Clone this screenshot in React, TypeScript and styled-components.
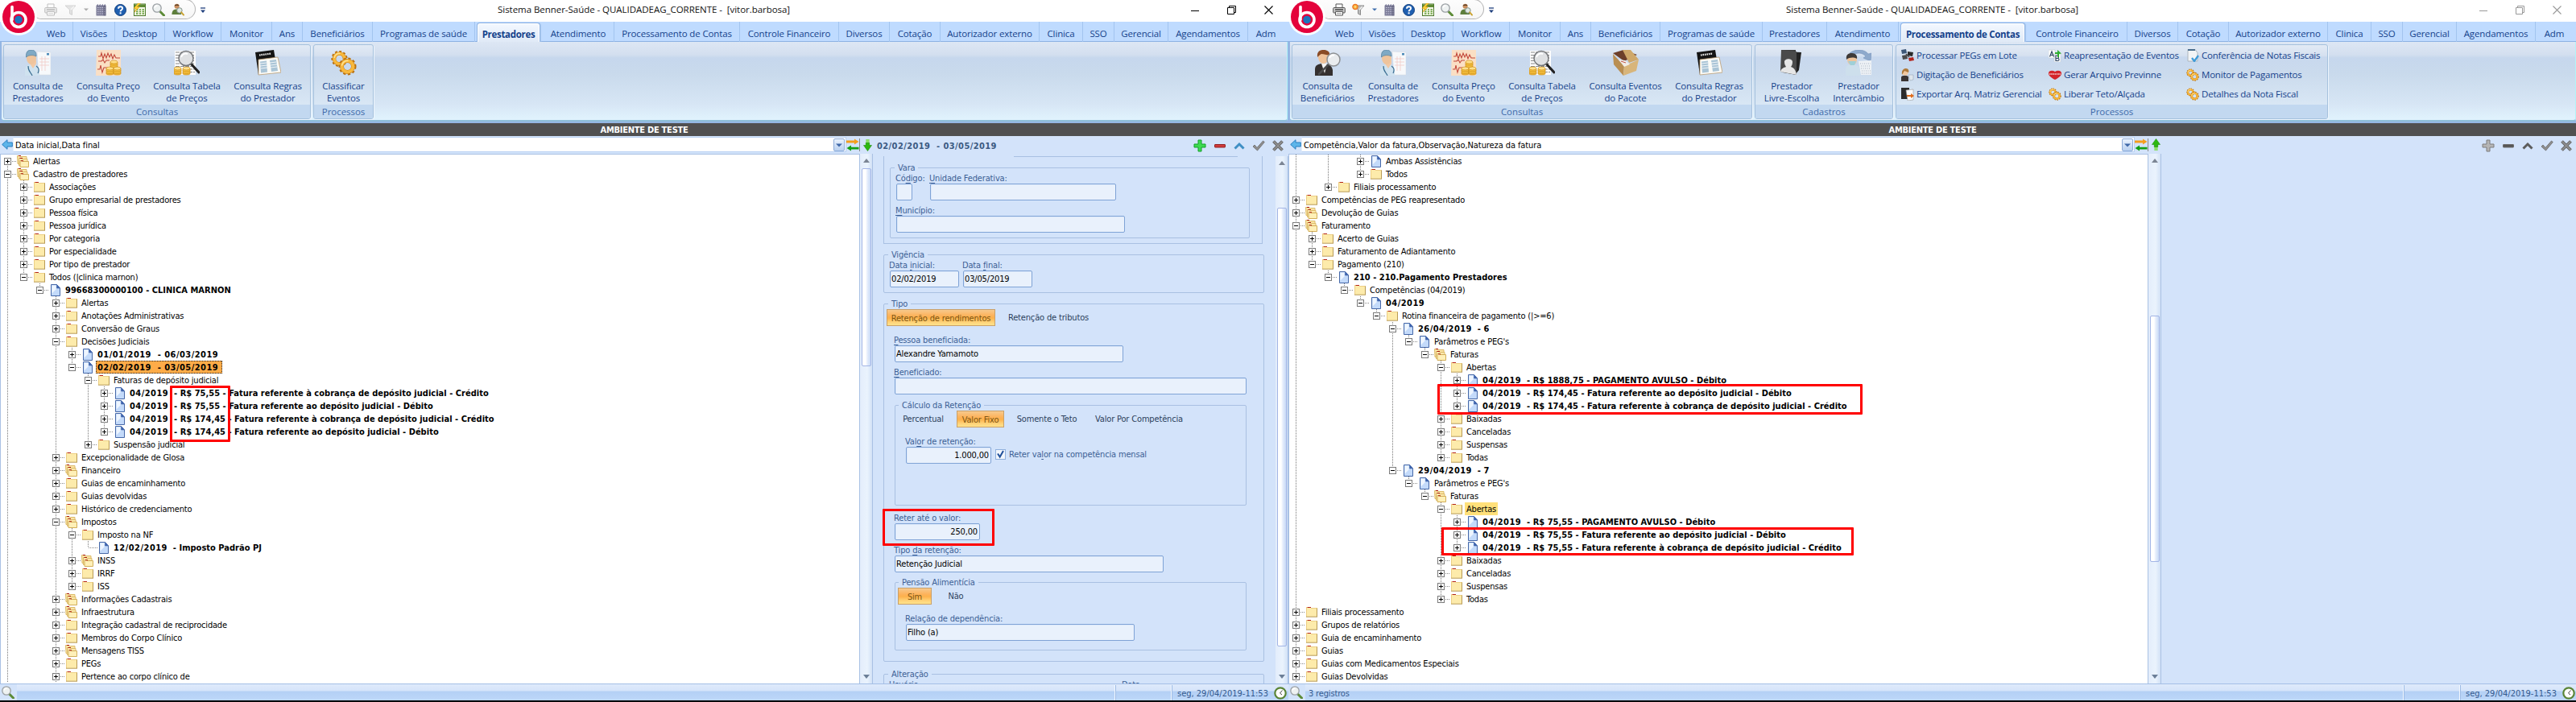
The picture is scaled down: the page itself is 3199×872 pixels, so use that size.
import React from "react";
import styled, { createGlobalStyle, css } from "styled-components";

const TAHOMA = '"DejaVu Sans Condensed", "DejaVu Sans", sans-serif';
const SEGOE = '"Open Sans", "Noto Sans", sans-serif';

const GlobalStyle = createGlobalStyle`
  * { box-sizing: border-box; }
  body { margin: 0; background: #000; overflow: hidden; }
  #root { height: 872px; }
`;

const Desktop = styled.main`
  display: flex;
  height: 872px;
  width: 3199px;
  background: #000;
  overflow: hidden;
`;

const AppWindow = styled.section`
  position: relative;
  display: flex;
  flex-direction: column;
  width: 1600px;
  height: 870px;
  flex: none;
  background: #d3e3fa;
  font-family: ${TAHOMA};
  font-size: 11px;
  white-space: pre;
`;

/* ---------- title bar ---------- */

const TitleBar = styled.header`
  position: relative;
  display: flex;
  align-items: flex-start;
  height: 27px;
  background: #fff;
`;

const QuickBar = styled.div`
  display: flex;
  align-items: center;
  width: 204px;
  height: 25px;
  margin: -1px 0 0 39px;
  padding: 1px 0 0 15px;
  border: 1px solid #b4b4b4;
  border-left-color: transparent;
  border-radius: 0 14px 14px 14px;
  background: linear-gradient(#fdfdfd, #f6f6f6);
`;

const QuickIcon = styled.span<{ $gap?: number; $w?: number; $faded?: boolean }>`
  display: flex;
  justify-content: center;
  width: ${(p) => p.$w ?? 16}px;
  margin-right: ${(p) => p.$gap ?? 8}px;
  opacity: ${(p) => (p.$faded ? 0.35 : 1)};
  filter: ${(p) => (p.$faded ? "grayscale(1)" : "none")};
`;

const BarMenu = styled.span`
  display: flex;
  margin: 9px 0 0 6px;
`;

const Title = styled.h1`
  margin: 0 0 0 363px;
  width: 380px;
  font: 400 11.5px/24px ${SEGOE};
  letter-spacing: -0.04px;
  color: #111;
`;

const WindowButtons = styled.div<{ $active: boolean }>`
  display: flex;
  align-items: center;
  gap: 35px;
  margin-left: 481px;
  height: 25px;
  color: ${(p) => (p.$active ? "#000" : "#999")};
`;

const Logo = styled.div`
  position: absolute;
  left: 0;
  top: -2px;
  width: 48px;
  height: 48px;
  z-index: 2;
`;

/* ---------- ribbon ---------- */

const TabStrip = styled.nav`
  display: flex;
  height: 25px;
  padding-left: 49px;
  background: #bfdbff;
  border-bottom: 1px solid #8db2e3;
`;

const Tab = styled.span<{ $w: number; $active?: boolean }>`
  width: ${(p) => p.$w}px;
  height: 25px;
  flex: none;
  text-align: center;
  color: #15428b;
  font: 400 11.5px/30px ${SEGOE};
  letter-spacing: -0.13px;
  border-right: 1px solid #a2c4ef;
  overflow: hidden;
  &:last-child { border-right: 0; }
  ${(p) =>
    p.$active &&
    css`
      width: ${p.$w - 5}px;
      margin: 1px 3px 0 2px;
      font-weight: 700;
      line-height: 27px;
      letter-spacing: -0.3px;
      background: linear-gradient(#f3f8ff, #dfe9f6);
      border: 1px solid #8db2e3;
      border-bottom: 0;
      border-radius: 4px 4px 0 0;
      box-shadow: 1px 0 1px #a9c8ee, inset 0 0 0 1px #fff;
    `}
`;

const Ribbon = styled.div`
  height: 101px;
  padding: 0 1px 2px 2px;
  background: #94b6e3;
`;

const RibbonBody = styled.div`
  display: flex;
  gap: 3px;
  height: 99px;
  padding: 3px 2px;
  border-radius: 0 0 4px 4px;
  border-right: 1px solid #b2f4f8;
  border-bottom: 2px solid #8fbfd8;
  background: linear-gradient(#dde7f4 0, #d3dfef 16px, #c6d7ed 20px, #c9daec 40px, #d7e6f5 78px, #e0f2fd 95px);
`;

const Group = styled.section<{ $w: number }>`
  display: flex;
  flex-direction: column;
  width: ${(p) => p.$w}px;
  height: 93px;
  border: 1px solid #a5c1dd;
  border-radius: 3px;
  background: linear-gradient(#e2eaf5 0, #d6e1f0 13px, #c8d8ee 15px, #cbdbed 36px, #d9e7f5 75px);
  box-shadow: 1px 1px 0 #edf5fd;
  overflow: hidden;
`;

const GroupItems = styled.div`
  display: flex;
  flex: 1;
  padding: 6px 2px 0;
`;

const GroupLabel = styled.footer`
  height: 17px;
  background: #c2d8f0;
  color: #3e6aaa;
  text-align: center;
  font: 400 11.5px/17px ${SEGOE};
  letter-spacing: -0.05px;
`;

const LargeButton = styled.div<{ $w: number }>`
  display: flex;
  flex-direction: column;
  align-items: center;
  width: ${(p) => p.$w}px;
  flex: none;
  text-align: center;
  color: #15428b;
  font: 400 11.5px/15px ${SEGOE};
  letter-spacing: -0.13px;
  svg { margin-bottom: 5px; }
`;

const SmallColumn = styled.div<{ $w: number }>`
  display: flex;
  flex-direction: column;
  width: ${(p) => p.$w}px;
  margin-top: -5px;
`;

const SmallButton = styled.div`
  display: flex;
  align-items: center;
  gap: 3px;
  height: 24px;
  padding-left: 4px;
  color: #15428b;
  font: 400 11.5px/24px ${SEGOE};
  letter-spacing: -0.21px;
`;

const EnvironmentBar = styled.div`
  height: 16px;
  background: #505050;
  color: #fff;
  text-align: center;
  font-weight: 700;
  line-height: 17px;
  letter-spacing: -0.25px;
`;

/* ---------- toolbar ---------- */

const Toolbar = styled.div`
  display: flex;
  align-items: center;
  height: 22px;
  padding: 0 0 1px 2px;
  background: #d3e3fa;
`;

const PathInput = styled.div`
  display: flex;
  align-items: center;
  justify-content: space-between;
  width: 1035px;
  height: 19px;
  margin-left: 0;
  padding: 1px 1px 0 2px;
  background: #fff;
  border: 1px solid #b9d2f3;
  border-left-color: #e6effc;
  color: #000;
  letter-spacing: -0.09px;
`;

const DropButton = styled.span`
  display: flex;
  align-items: center;
  justify-content: center;
  width: 14px;
  height: 16px;
  border: 1px solid #8fadd9;
  border-radius: 2px;
  background: linear-gradient(#eaf2fd, #b9d0f0);
`;

const SwapIcon = styled.span`
  display: flex;
  width: 17px;
  height: 16px;
  border-right: 1px solid #8a8a8a;
`;

const RecordTitle = styled.h2`
  width: 391px;
  margin: 0 0 0 5px;
  padding-top: 4px;
  font: 700 11px/16px ${TAHOMA};
  letter-spacing: 0.41px;
  color: #3b5a82;
`;

const ArrowSlot = styled.span`
  display: flex;
  width: 12px;
  margin-left: 4px;
`;

const Actions = styled.div`
  display: flex;
  align-items: center;
  gap: 8px;
  margin: 2px 0 0 2px;
`;

/* ---------- workspace ---------- */

const Workspace = styled.div`
  display: flex;
  height: 658px;
  overflow: hidden;
`;

const TreePanel = styled.div`
  position: relative;
  width: 1068px;
  height: 658px;
  flex: none;
  border: 1px solid #a9c1e4;
  border-bottom: 0;
  background: #fff;
  overflow: hidden;
`;

const Row = styled.div`
  display: flex;
  align-items: center;
  height: 16px;
`;

const GuideCell = styled.span<{ $line: "none" | "full" | "top" | "bottom" }>`
  width: 20px;
  height: 16px;
  flex: none;
  background: ${(p) =>
    p.$line === "none"
      ? "none"
      : "repeating-linear-gradient(#777 0 1px, transparent 1px 2px) no-repeat"};
  background-size: 1px ${(p) => (p.$line === "full" ? 16 : 8)}px;
  background-position: 8px ${(p) => (p.$line === "bottom" ? 8 : 0)}px;
`;

const NodeCell = styled(GuideCell)`
  display: flex;
  align-items: center;
  padding-left: 4px;
`;

const Expander = styled.span`
  position: relative;
  width: 9px;
  height: 9px;
  flex: none;
  border: 1px solid #7b7b7b;
  background: #fff;
`;

const ExpanderSign = styled.svg`
  display: block;
  width: 7px;
  height: 7px;
`;

const Stub = styled.span<{ $leaf?: boolean }>`
  width: ${(p) => (p.$leaf ? 11 : 6)}px;
  margin-left: ${(p) => (p.$leaf ? 5 : 1)}px;
  height: 1px;
  background: repeating-linear-gradient(90deg, #888 0 1px, transparent 1px 2px);
`;

const NodeIcon = styled.span`
  display: flex;
  width: 16px;
  height: 16px;
  flex: none;
`;

const NodeText = styled.span<{ $bold?: boolean; $mark?: "selected" | "soft" }>`
  height: 16px;
  margin-left: 2px;
  padding: 0 2px;
  line-height: 17px;
  color: #000;
  font-weight: ${(p) => (p.$bold ? 700 : 400)};
  letter-spacing: ${(p) => (p.$bold ? "0.02px" : "-0.19px")};
  ${(p) =>
    p.$mark === "selected" &&
    css`
      padding: 0 4px 0 1px;
      line-height: 15px;
      background: #ffac48;
      border: 1px dotted #222;
    `}
  ${(p) => p.$mark === "soft" && css`background: #ffe07a;`}
`;

const DateRun = styled.span`
  letter-spacing: 0.46px;
`;

const Scrollbar = styled.div<{ $top?: number }>`
  position: relative;
  width: 16px;
  height: ${(p) => 658 - (p.$top ?? 0)}px;
  margin-top: ${(p) => p.$top ?? 0}px;
  flex: none;
  display: flex;
  flex-direction: column;
  align-items: center;
  background: linear-gradient(90deg, #e3edfb, #eaf3fd 60%, #d2e1f6);
  border-right: 1px solid #a9c1e4;
`;

const Thumb = styled.span<{ $before: number; $h: number }>`
  width: 12px;
  height: ${(p) => p.$h}px;
  margin-top: ${(p) => p.$before}px;
  border: 1px solid #a3b5e6;
  border-radius: 2px;
  background: linear-gradient(90deg, #fff 40%, #e6eefc 60%, #c8daf6);
`;

const ScrollArrow = styled.span<{ $down?: boolean }>`
  width: 0;
  height: 0;
  border: 4.5px solid transparent;
  ${(p) =>
    p.$down
      ? css`
          margin-top: auto;
          margin-bottom: 2px;
          border-top: 5px solid #6c7f98;
        `
      : css`
          margin-top: 2px;
          border-bottom: 5px solid #7b8594;
        `}
`;

const Highlight = styled.div<{ $x: number; $y: number; $w: number; $h: number }>`
  position: absolute;
  left: ${(p) => p.$x}px;
  top: ${(p) => p.$y}px;
  width: ${(p) => p.$w}px;
  height: ${(p) => p.$h}px;
  border: 3px solid #f00;
  border-radius: 1px;
`;

/* ---------- record form ---------- */

const Form = styled.div`
  position: relative;
  width: 500px;
  height: 658px;
  flex: none;
  padding: 3px 0 0 13px;
  overflow: hidden;
  color: #3c5f95;
  letter-spacing: -0.16px;
`;

const OpenFrame = styled.div`
  width: 471px;
  height: 109px;
  border: 1px solid #a9c0e2;
  border-top: 0;
`;

const CutLine = styled.div`
  width: 278px;
  height: 1px;
  margin-left: 161px;
  background: #a9c0e2;
`;

const Frame = styled.fieldset<{ $w: number; $h: number; $mt?: number; $ml?: number; $pad?: number }>`
  width: ${(p) => p.$w}px;
  height: ${(p) => p.$h}px;
  min-width: 0;
  margin: ${(p) => p.$mt ?? 0}px 0 0 ${(p) => p.$ml ?? 0}px;
  padding: 0 0 0 ${(p) => p.$pad ?? 7}px;
  border: 1px solid #a9c0e2;
  border-radius: 2px;
`;

const Legend = styled.legend<{ $pull?: number }>`
  height: 14px;
  margin-left: ${(p) => p.$pull ?? -2}px;
  padding: 0 4px;
  line-height: 15px;
`;

const FieldRow = styled.div<{ $mt?: number; $gap?: number }>`
  display: flex;
  align-items: flex-end;
  gap: ${(p) => p.$gap ?? 5}px;
  margin-top: ${(p) => p.$mt ?? 0}px;
`;

const Field = styled.label<{ $w: number }>`
  display: block;
  width: ${(p) => p.$w}px;
  flex: none;
`;

const FieldLabel = styled.span`
  display: block;
  height: 13px;
  margin-left: -1px;
  line-height: 13px;
  u { text-underline-offset: 2px; }
`;

const FieldValue = styled.span<{ $right?: boolean }>`
  display: block;
  height: 21px;
  padding: 0 2px 0 1px;
  line-height: 19px;
  text-align: ${(p) => (p.$right ? "right" : "left")};
  color: #000;
  background: #e9f1fc;
  border: 1px solid #7fa3d6;
  border-radius: 2px;
  box-shadow: inset 1px 1px 0 #dce8fa;
`;

const ToggleRow = styled.div<{ $ml: number }>`
  display: flex;
  gap: 10px;
  margin-left: ${(p) => p.$ml}px;
`;

const Toggle = styled.span<{ $w: number; $on?: boolean }>`
  width: ${(p) => p.$w}px;
  height: 21px;
  text-align: center;
  line-height: 22px;
  color: #2c3f5c;
  ${(p) =>
    p.$on &&
    css`
      line-height: 20px;
      padding-top: 1px;
      color: #7c5512;
      border: 1px solid #c9a069;
      background: linear-gradient(#f7c98d 0, #fdb35c 7px, #fdb14c 10px, #ffd277 15px, #ffe791 20px);
    `}
`;

const Check = styled.span`
  display: flex;
  align-items: center;
  gap: 4px;
  height: 17px;
  margin-bottom: 3px;
  u { text-underline-offset: 2px; }
`;

/* ---------- status bar ---------- */

const StatusBar = styled.footer`
  display: flex;
  align-items: center;
  height: 21px;
  border-top: 1px solid #a4bfe6;
  background: linear-gradient(#dfeafb 0, #d5e4fa 8px, #b4d0f5 9px, #bdd7f9 20px);
  color: #33598f;
`;

const StatusIcon = styled.span`
  display: flex;
  align-items: center;
  width: 21px;
  height: 20px;
  padding-left: 2px;
  background: #d3e3fa;
`;

const StatusCell = styled.span<{ $w: number }>`
  width: ${(p) => p.$w}px;
  height: 19px;
  padding: 3px 0 0 4px;
  line-height: 16px;
  border-right: 1px solid #f2f8ff;
  box-shadow: 1px 0 0 #9dbbe5;
  letter-spacing: -0.16px;
`;

const StatusClock = styled.span`
  display: flex;
  align-items: center;
  justify-content: space-between;
  flex: 1;
  padding: 2px 2px 0 7px;
  letter-spacing: 0;
`;

/* ---------- drawings ---------- */

const BennerLogo = () => (
  <svg width="48" height="48" viewBox="0 0 48 48">
    <circle cx="23" cy="23" r="23" fill="#fff" opacity=".9" />
    <circle cx="23" cy="23" r="20" fill="#e4033b" />
    <path d="M15 10.500V26.500" stroke="#fff" strokeWidth="3.600" strokeLinecap="round" />
    <circle cx="23" cy="26.500" r="9" fill="none" stroke="#fff" strokeWidth="3.600" />
    <circle cx="23" cy="26.500" r="4.800" fill="#1c75bc" />
  </svg>
);

const Printer = () => (
  <svg width="16" height="16" viewBox="0 0 16 16">
    <path d="M4 1h8v5H4z" fill="#fff" stroke="#555" />
    <rect x=".7" y="5.500" width="14.600" height="6.500" rx="1" fill="#c9c9c9" stroke="#555" />
    <path d="M3 8h10" stroke="#444" strokeWidth="1.500" />
    <path d="M3.500 10.500h9V15h-9z" fill="#fff" stroke="#555" />
    <path d="M5 12.700h6" stroke="#999" />
  </svg>
);

const Funnel = ({ lit }: { lit: boolean }) => (
  <svg width="16" height="16" viewBox="0 0 16 16">
    <path d="M2 3h13l-4.500 5v6.500l-3-1.500V8z" fill="#bdbdbd" stroke="#8a8a8a" />
    <path d="M9 8l4-4" stroke="#f2f2f2" strokeWidth="1.500" />
    {lit && <circle cx="4" cy="4.500" r="3.300" fill="#f7a53a" stroke="#ea6a1c" />}
    {lit && <circle cx="4" cy="4.500" r="1.300" fill="#ffe27a" />}
  </svg>
);

const CaretDown = ({ color }: { color: string }) => (
  <svg width="6" height="4" viewBox="0 0 6 4">
    <path d="M0 .5h6L3 3.500z" fill={color} />
  </svg>
);

const Building = () => (
  <svg width="14" height="16" viewBox="0 0 14 16">
    <path d="M.5 15.500V3l2-2 1 2 2-2 1 2 2-2 1 2 2-2 1 2v12.500z" fill="#7c7c98" />
    <path d="M2 5.500h10M2 8h10M2 10.500h10M2 13h10" stroke="#c6c6da" strokeDasharray="1.500 1.200" />
    <path d="M9.500 3h3v12.500h-3z" fill="#55556e" opacity=".45" />
  </svg>
);

const Help = () => (
  <svg width="15" height="15" viewBox="0 0 15 15">
    <circle cx="7.500" cy="7.500" r="7" fill="#1f5fb0" stroke="#123f7c" />
    <path d="M5 5.700C5 4 6.200 3.200 7.500 3.200S10.100 4 10.100 5.500C10.100 7.200 7.600 7.300 7.600 9.200" fill="none" stroke="#fff" strokeWidth="1.900" />
    <rect x="6.600" y="10.300" width="2" height="2" fill="#fff" />
  </svg>
);

const Calc = () => (
  <svg width="16" height="16" viewBox="0 0 16 16">
    <rect x="1.500" y="1" width="14" height="14.500" fill="#f4f7e6" stroke="#4d7a2c" />
    <path d="M2 1.500h13v3.500H2z" fill="#5e8b35" />
    <path d="M4 8h2.500M8 8h2M11.500 8H14M4 10.500h2.500M8 10.500h2M11.500 10.500H14M4 13h2.500M8 13h2M11.500 13H14" stroke="#5f9a36" strokeWidth="1.700" />
    <path d="M6.500 0L1 6.500h3L2 11l6.500-6.500H5.200L9.500 0z" fill="#ffd23a" stroke="#d59b12" strokeWidth=".6" />
  </svg>
);

const Magnifier = () => (
  <svg width="16" height="16" viewBox="0 0 16 16">
    <path d="M9.500 10l5 5" stroke="#5d8b37" strokeWidth="3" strokeLinecap="round" />
    <circle cx="6" cy="6" r="5.200" fill="#eef2f2" stroke="#9a9fa3" strokeWidth="1.300" />
    <path d="M3 5.500C3.500 3.700 5 3 6.500 3" stroke="#fff" strokeWidth="1.400" fill="none" />
  </svg>
);

const PersonSearch = () => (
  <svg width="17" height="16" viewBox="0 0 17 16">
    <circle cx="7" cy="3.600" r="3.200" fill="#c98d5c" />
    <path d="M4 3.200C4 .6 10 .2 10 3.200 8.500 2 6 2 4 3.200z" fill="#4b3320" />
    <path d="M.5 14.500C.5 9 3 7.500 7 7.500s5.500 2 6 7z" fill="#5e7f3c" />
    <circle cx="10.500" cy="9" r="3.500" fill="#dfe9e4" stroke="#7b8a80" />
    <path d="M13 11.500l3 3.500" stroke="#c9a12e" strokeWidth="2" strokeLinecap="round" />
  </svg>
);

const CustomizeBar = () => (
  <svg width="6" height="8" viewBox="0 0 6 8">
    <path d="M0 1h6" stroke="#1f3f7d" strokeWidth="1.300" />
    <path d="M0 3.500h6L3 7z" fill="#1f3f7d" />
  </svg>
);

const Doctor = () => (
  <svg width="32" height="32" viewBox="0 0 32 32">
    <path d="M15 2l17 1v28H17z" fill="#f7f9fb" stroke="#d8dde4" strokeWidth=".6" />
    <path d="M18 11h12M18 15h12M18 19h12M21 8v18M25 8v18" stroke="#f0c4c0" strokeWidth=".7" />
    <path d="M27 4h3v2.500h-3z" fill="#4d8ab8" />
    <path d="M0 32V26c0-6 4-8 9-8s9 3 9 9v5z" fill="#cfe2ef" />
    <path d="M6 17l4 6 4-6v-4H6z" fill="#f3c9a4" />
    <ellipse cx="8" cy="10.500" rx="6" ry="7.500" fill="#efc49c" />
    <path d="M1.500 9C1 2 4 0 8 0s6.500 3 6 8C10 6 5 6 1.500 9z" fill="#7fa9c4" stroke="#4f7d9c" strokeWidth=".7" />
    <path d="M4 20c0 8 4 8 5 12M14 20c3 2 4 5 2 9" stroke="#3c6f93" strokeWidth="1.200" fill="none" />
  </svg>
);

const Coins = ({ x, y }: { x: number; y: number }) => (
  <g transform={`translate(${x} ${y})`} stroke="#c98a14" strokeWidth=".6">
    <path d="M0 3v6.500c0 2 9 2 9 0V3z" fill="#f4bf3e" />
    <path d="M0 5.500c0 2 9 2 9 0M0 8c0 2 9 2 9 0" fill="none" />
    <ellipse cx="4.500" cy="3" rx="4.500" ry="1.900" fill="#ffe08a" />
  </g>
);

const PriceEvent = () => (
  <svg width="32" height="32" viewBox="0 0 32 32">
    <path d="M1 0h30v32H0z" fill="#fadfc4" />
    <path d="M3 8h3l1-4 2 7 2-6 2 5 2-6 2 5 2-4 2 6 2-5 2 4h5M3 14h4l2-2 2 4 2-3h4M2 24h3l1-5 2 9 2-6h5" fill="none" stroke="#c2473a" strokeWidth="1.100" />
    <Coins x={18} y={12} /><Coins x={13} y={20} /><Coins x={22} y={20} />
  </svg>
);

const PriceTable = () => (
  <svg width="32" height="32" viewBox="0 0 32 32">
    <path d="M1 1h26v30H1z" fill="#fdfdfd" />
    <path d="M2 3h24M2 6.500h24M2 10h24M2 13.500h24M2 17h24M2 20.500h24M12 24h14M12 27.500h14" stroke="#8a8a8a" strokeWidth="1.100" strokeDasharray="5 1" />
    <path d="M21 17l10 11" stroke="#222" strokeWidth="3" strokeLinecap="round" />
    <circle cx="15" cy="10.500" r="9" fill="#dfe1e3" stroke="#77797c" strokeWidth="1.500" />
    <path d="M9 9c1-4 5-5 8-4" stroke="#fff" strokeWidth="2" fill="none" />
    <Coins x={0} y={20} /><Coins x={11} y={20} />
  </svg>
);

const RulesBook = () => (
  <svg width="32" height="32" viewBox="0 0 32 32">
    <path d="M0 3L23 0l2 12L4 31z" fill="#141414" />
    <path d="M4 12l24-3 4 19-28 3z" fill="#fbfbf7" stroke="#b99c74" strokeWidth=".8" />
    <path d="M6 14.500l8-1 1 14-8 1zM18 13l8-1 2 14-8 1z" fill="#a9c4d6" />
    <path d="M6 17l8-1M6 20l9-1M7 23l8-1M18 16l8-1M19 19l8-1M19 22l8-1" stroke="#fff" strokeWidth=".8" />
    <path d="M5 6.500L20 4.500" stroke="#eee" strokeWidth="2.200" strokeDasharray="1.600 .9" />
  </svg>
);

const gear = (cx: number, cy: number, r: number, sw: number) => (
  <g fill="none">
    <circle cx={cx} cy={cy} r={r + sw * 0.55} stroke="#b9700f" strokeWidth={sw * 0.9} strokeDasharray={`${sw * 0.75} ${sw * 0.62}`} />
    <circle cx={cx} cy={cy} r={r} stroke="#c47c17" strokeWidth={sw + 0.9} />
    <circle cx={cx} cy={cy} r={r} stroke="#f8b83c" strokeWidth={sw} />
    <path d={`M${cx - r} ${cy - 1}A${r} ${r} 0 0 1 ${cx + 1} ${cy - r}`} stroke="#ffe08c" strokeWidth={sw * 0.45} />
  </g>
);

const Gears = ({ size = 32 }: { size?: number }) => (
  <svg width={size} height={size} viewBox="0 0 32 32">
    {gear(10.500, 11, 6.500, 3.600)}
    {gear(20.500, 20.500, 7, 4)}
  </svg>
);

const BeneficiarySearch = () => (
  <svg width="32" height="32" viewBox="0 0 32 32">
    <path d="M0 32v-8c0-5 4-7 10-7s11 2 12 8v7z" fill="#34302f" />
    <path d="M8 17h7l-3 12z" fill="#f4f4f4" />
    <ellipse cx="10.500" cy="9" rx="6.500" ry="8" fill="#f0c39a" />
    <path d="M3 9C2 1 7 0 11 0s8 2 7 7c-4-1-7-2-10-2-2 1-3 2-5 4z" fill="#8a4b25" />
    <path d="M17 18L5 30" stroke="#4a4a4a" strokeWidth="2.600" strokeLinecap="round" />
    <circle cx="23" cy="12" r="8" fill="#e9ecee" stroke="#8d9093" strokeWidth="1.500" />
    <path d="M18 10c1-3 4-4 6-3" stroke="#fff" strokeWidth="2" fill="none" />
  </svg>
);

const PackageBox = () => (
  <svg width="32" height="32" viewBox="0 0 32 32">
    <path d="M0 4l13-4 17 6-16 8z" fill="#6d3f2a" />
    <path d="M12 0h10l10 12-12 4z" fill="#cfa86a" />
    <path d="M0 5l14 15-1 12L1 18z" fill="#b98e52" />
    <path d="M14 20l18-8-3 14-16 6z" fill="#d8b57a" />
    <path d="M7 12l8 1 6 5-7 3z" fill="#f2ece6" />
    <path d="M10 14l6 2" stroke="#c0564a" />
  </svg>
);

const FreeChoice = () => (
  <svg width="32" height="32" viewBox="0 0 32 32">
    <path d="M8 2l20 1-3 22-5 6z" fill="#222" />
    <path d="M3 0h18l1 31-17-3z" fill="#3d3d3d" />
    <path d="M3 0l19 2v29L2 27z" fill="#4a4a4a" />
    <path d="M2 27c1-4 4-5 7-6-1-2-2-3-2-6 0-5 10-5 10 0 0 3-1 5-2 6 3 1 6 3 7 10z" fill="#e6e6e6" />
  </svg>
);

const Exchange = () => (
  <svg width="32" height="32" viewBox="0 0 32 32">
    <path d="M5 4C12-2 24-1 28 5l4-1-1 10-9-4 3-2C21 3 13 3 9 7z" fill="#8ea9cc" stroke="#6f8db6" strokeWidth=".5" />
    <path d="M16 14l16-1v18H19z" fill="#eef2f6" />
    <path d="M18 17h13M19 20h12M19 23h12M20 26h11M20 29h11" stroke="#a7b3c2" strokeWidth="1" strokeDasharray="1 1.500" />
    <path d="M0 32v-8c0-5 4-6 9-6s9 3 9 9v5z" fill="#cddfec" />
    <ellipse cx="8" cy="12" rx="6" ry="7" fill="#efc49c" />
    <path d="M1 12C0 5 4 4 8 4s7 3 6 7C10 9 5 9 1 12z" fill="#3e3a38" />
    <path d="M3 14h10l-2 5H6z" fill="#9fd0d8" />
  </svg>
);

type SmallKind = "peg" | "digit" | "export" | "ab" | "heart" | "gears" | "note";

const SmallIcon = ({ kind }: { kind: SmallKind }) => {
  if (kind === "gears") return <Gears size={16} />;
  return (
    <svg width="16" height="16" viewBox="0 0 16 16">
      {kind === "peg" && (
        <>
          <path d="M0 1l6-1 1 5-6 1z" fill="#3e5878" />
          <path d="M8 3l7 1-1 5-6-1z" fill="#2b2b2b" />
          <path d="M1 8l6-1 1 5-6 1z" fill="#4b4b4b" />
          <path d="M9 11l6-1 1 4-6 1z" fill="#b3261e" />
          <path d="M6 6l4 4" stroke="#444" strokeWidth="1.500" />
        </>
      )}
      {kind === "digit" && (
        <>
          <path d="M0 16V11c0-3 9-3 9 0v5z" fill="#3a3433" />
          <circle cx="5" cy="5" r="3.800" fill="#f0c7a0" />
          <path d="M1 8C0 1 4 0 6 0c3 0 4 3 3 5L4 3z" fill="#b07a3a" />
          <path d="M9 8h6v6l-4 1z" fill="#dfe6ec" stroke="#9caab8" strokeWidth=".6" />
        </>
      )}
      {kind === "export" && (
        <>
          <path d="M0 0h10v14H0z" fill="#2c2c2c" />
          <path d="M6 3l9-1v13l-7 1z" fill="#fbfbfb" stroke="#999" strokeWidth=".6" />
          <path d="M7 9h5V7l4 3-4 3v-2H7z" fill="#e06c1c" />
        </>
      )}
      {kind === "ab" && (
        <>
          <path d="M0 1h8v10H0zM7 6h8v10H7z" fill="#fff" stroke="#c5ccd3" strokeWidth=".6" />
          <path d="M1.500 9.500L4 3l2.500 6.500M2.500 7.500h3M9 8v6.500h2.500c2 0 2-3 0-3H9h2c2 0 2-3.500 0-3.500z" stroke="#2f4763" strokeWidth="1.200" fill="none" />
          <path d="M8 4h3V1l5 4.500-3 .5v4h-2V6H8z" fill="#2fae2f" />
        </>
      )}
      {kind === "heart" && (
        <>
          <path d="M8 14C2 11 0 8.500 0 6 0 2.500 5 2 8 4c3-2 8-1.500 8 2 0 2.500-2 5-8 8z" fill="#d3252b" />
          <path d="M1 7h14" stroke="#f6d7d7" strokeWidth="1.500" strokeDasharray="1.500 .7" />
        </>
      )}
      {kind === "note" && (
        <>
          <path d="M2 .5h9l3 4V15H2z" fill="#f2f4f6" stroke="#aeb6be" />
          <path d="M2 0h9v2H2z" fill="#4a6d8c" />
          <path d="M7 11l3 4 5-7" stroke="#3f9bd8" strokeWidth="2.300" fill="none" />
        </>
      )}
    </svg>
  );
};

const BackArrow = () => (
  <svg width="14" height="13" viewBox="0 0 14 13">
    <path d="M.7 6.500L7 .7v3.300h6.300v5H7v3.300z" fill="#5db5ea" stroke="#2a7fc0" />
  </svg>
);

const SwapArrows = () => (
  <svg width="16" height="16" viewBox="0 0 16 16">
    <path d="M0 2.500h10V.5L15.500 4 10 7.500V5.500H0z" fill="#f59f1c" />
    <path d="M15.500 10.700H6V8.500L.5 12 6 15.500v-2.100h9.500z" fill="#13a013" />
  </svg>
);

const VertArrow = ({ up }: { up: boolean }) => (
  <svg width="11" height="16" viewBox="0 0 11 16">
    <g transform={up ? "" : "rotate(180 5.500 8)"}>
      <path d="M3.300 6h4.400v9H3.300z" fill="#8ddf6c" />
      <path d="M5.500.5L10.500 7.500H7.700v3H3.300v-3H.5z" fill="#2cb80f" stroke="#1e8f0c" strokeWidth=".6" />
    </g>
  </svg>
);

const RecordActions = ({ active }: { active: boolean }) => {
  const chevron = active ? "#3f8fc4" : "#5c5c5c";
  return (
    <Actions>
      <svg width="17" height="16" viewBox="0 0 17 16">
        <path d="M6 1h4v5h5v4h-5v5H6v-5H1V6h5z" fill={active ? "#3edb50" : "#b5b5b5"} stroke={active ? "#13a02a" : "#7d7d7d"} />
      </svg>
      <svg width="16" height="16" viewBox="0 0 16 16">
        <rect x="1.500" y="6.500" width="13" height="3.500" rx=".5" fill={active ? "#cf3a3a" : "#555"} stroke={active ? "#932222" : "#6d6d6d"} />
      </svg>
      <svg width="16" height="16" viewBox="0 0 16 16">
        <path d="M2.500 11.500L8 6l5.500 5.500" fill="none" stroke={chevron} strokeWidth="3" />
      </svg>
      <svg width="16" height="16" viewBox="0 0 16 16">
        <path d="M1 9l2-2 3 3.500L13.500 2l1.800 1.500L6.500 14z" fill="#8f8f8f" stroke="#6a6a6a" strokeWidth=".8" />
      </svg>
      <svg width="16" height="16" viewBox="0 0 16 16">
        <path d="M2.500 2.500l11 11M13.500 2.500l-11 11" stroke="#5f5f5f" strokeWidth="3.800" />
        <path d="M2.800 2.800l10.400 10.400M13.200 2.800L2.800 13.200" stroke="#8e8e8e" strokeWidth="2" />
      </svg>
    </Actions>
  );
};

type IconKind = "folder" | "stack" | "doc";

const TreeIcon = ({ kind }: { kind: IconKind }) => (
  <svg width="16" height="16" viewBox="0 0 16 16">
    {kind === "folder" && (
      <>
        <path d="M1 2h6v1.500h8V14H1z" fill="#fdebab" />
        <path d="M1.500 2v12M7 3.500h8" stroke="#edcf85" />
        <path d="M1 14.200h14M14.500 3.500V14" stroke="#b89a55" />
        <path d="M2.500 2.500h4.500" stroke="#b32318" />
      </>
    )}
    {kind === "stack" && (
      <>
        <path d="M.5 1.500h4v1h7.500v9H1z" fill="#fbe5a6" stroke="#dcbb6b" />
        <path d="M2.500 4.500h4v1h6.500v8H2.500z" fill="#fce8ac" stroke="#dcbb6b" />
        <path d="M4 7.500h3v1h7.500v7H4z" fill="#fff0b8" stroke="#d2ae5a" />
        <path d="M2 1.500h3M3.500 4.500h3.500M5 7.800h3" stroke="#a8160f" />
      </>
    )}
    {kind === "doc" && (
      <>
        <path d="M2.500 1.500h7l4 4.500v9.500h-11z" fill="#c3dafa" stroke="#4668a8" />
        <path d="M3.500 2.500h5v5l-5 5z" fill="#eef5ff" />
        <path d="M9.500 1.500V6h4z" fill="#3b62b0" stroke="#4668a8" strokeWidth=".6" />
      </>
    )}
  </svg>
);

const Clock = () => (
  <svg width="16" height="16" viewBox="0 0 16 16">
    <circle cx="8" cy="8" r="6.700" fill="#fff" stroke="#5a8536" strokeWidth="2.200" />
    <path d="M10.500 4.500L7.500 8l2.500 2" fill="none" stroke="#444" />
  </svg>
);

const CheckBox = () => (
  <svg width="13" height="13" viewBox="0 0 13 13">
    <rect x=".5" y=".5" width="12" height="12" fill="#f2f6fc" stroke="#8fb0dd" />
    <path d="M3 5.500l2.700 4L10 2" fill="none" stroke="#20509a" strokeWidth="2" />
  </svg>
);

/* ---------- tree ---------- */

interface TreeNode {
  level: number;
  sign: "+" | "-" | "";
  icon: IconKind;
  text: string;
  date?: string;
  bold?: boolean;
  mark?: "selected" | "soft";
}

const folder = (level: number, text: string, sign: "+" | "-" = "+", mark?: "soft"): TreeNode => ({ level, sign, icon: "folder", text, mark });
const stack = (level: number, text: string, sign: "+" | "-" = "+"): TreeNode => ({ level, sign, icon: "stack", text });
const doc = (level: number, text: string, sign: "+" | "-" = "+"): TreeNode => ({ level, sign, icon: "doc", text });
const record = (level: number, date: string, text: string, sign: "+" | "-" | "" = "+", mark?: "selected"): TreeNode => ({ level, sign, icon: "doc", text, date, bold: true, mark });

function hasNext(nodes: TreeNode[], index: number, level: number, open: number[]) {
  for (let i = index + 1; i < nodes.length; i++) {
    if (nodes[i].level < level) return false;
    if (nodes[i].level === level) return true;
  }
  return open.includes(level);
}

const Tree = ({ nodes, open, skipFirst }: { nodes: TreeNode[]; open: number[]; skipFirst?: boolean }) => (
  <>
    {nodes.map((n, i) => {
      const next = hasNext(nodes, i, n.level, open);
      const own = i === 0 && skipFirst ? "bottom" : next ? "full" : "top";
      return (
        <Row key={i}>
          {Array.from({ length: n.level }, (_, k) => (
            <GuideCell key={k} $line={hasNext(nodes, i, k, open) ? "full" : "none"} />
          ))}
          <NodeCell $line={own}>
            {n.sign && (
              <Expander>
                <ExpanderSign viewBox="0 0 7 7">
                  <path d={n.sign === "+" ? "M1 3.500h5M3.500 1v5" : "M1 3.500h5"} stroke="#000" />
                </ExpanderSign>
              </Expander>
            )}
            <Stub $leaf={!n.sign} />
          </NodeCell>
          <NodeIcon><TreeIcon kind={n.icon} /></NodeIcon>
          <NodeText $bold={n.bold} $mark={n.mark}>
            {n.date && <DateRun>{n.date}</DateRun>}
            {n.text}
          </NodeText>
        </Row>
      );
    })}
  </>
);

const providerTree: TreeNode[] = [
  stack(0, "Alertas"),
  stack(0, "Cadastro de prestadores", "-"),
  folder(1, "Associações"),
  folder(1, "Grupo empresarial de prestadores"),
  folder(1, "Pessoa física"),
  folder(1, "Pessoa jurídica"),
  folder(1, "Por categoria"),
  folder(1, "Por especialidade"),
  folder(1, "Por tipo de prestador"),
  folder(1, "Todos (|clinica marnon)", "-"),
  record(2, "", "99668300000100 - CLINICA MARNON", "-"),
  folder(3, "Alertas"),
  folder(3, "Anotações Administrativas"),
  folder(3, "Conversão de Graus"),
  folder(3, "Decisões Judiciais", "-"),
  record(4, "01/01/2019  - 06/03/2019", ""),
  record(4, "02/02/2019  - 03/05/2019", "", "-", "selected"),
  folder(5, "Faturas de depósito judicial", "-"),
  record(6, "04/2019", "  - R$ 75,55 - Fatura referente à cobrança de depósito judicial - Crédito"),
  record(6, "04/2019", "  - R$ 75,55 - Fatura referente ao depósito judicial - Débito"),
  record(6, "04/2019", "  - R$ 174,45 - Fatura referente à cobrança de depósito judicial - Crédito"),
  record(6, "04/2019", "  - R$ 174,45 - Fatura referente ao depósito judicial - Débito"),
  folder(5, "Suspensão judicial"),
  folder(3, "Excepcionalidade de Glosa"),
  stack(3, "Financeiro"),
  folder(3, "Guias de encaminhamento"),
  folder(3, "Guias devolvidas"),
  folder(3, "Histórico de credenciamento"),
  stack(3, "Impostos", "-"),
  folder(4, "Imposto na NF", "-"),
  record(5, "12/02/2019", "  - Imposto Padrão PJ", ""),
  stack(4, "INSS"),
  folder(4, "IRRF"),
  folder(4, "ISS"),
  stack(3, "Informações Cadastrais"),
  stack(3, "Infraestrutura"),
  folder(3, "Integração cadastral de reciprocidade"),
  folder(3, "Membros do Corpo Clínico"),
  stack(3, "Mensagens TISS"),
  folder(3, "PEGs"),
  folder(3, "Pertence ao corpo clínico de"),
];

const invoiceStates = [folder(9, "Baixadas"), folder(9, "Canceladas"), folder(9, "Suspensas"), folder(9, "Todas")];

const billingTree: TreeNode[] = [
  doc(4, "Ambas Assistências"),
  folder(4, "Todos"),
  folder(2, "Filiais processamento"),
  folder(0, "Competências de PEG reapresentado"),
  stack(0, "Devolução de Guias"),
  stack(0, "Faturamento", "-"),
  folder(1, "Acerto de Guias"),
  folder(1, "Faturamento de Adiantamento"),
  folder(1, "Pagamento (210)", "-"),
  record(2, "", "210 - 210.Pagamento Prestadores", "-"),
  folder(3, "Competências (04/2019)", "-"),
  record(4, "04/2019", "", "-"),
  folder(5, "Rotina financeira de pagamento (|>=6)", "-"),
  record(6, "26/04/2019", "  - 6", "-"),
  doc(7, "Parâmetros e PEG's", "-"),
  stack(8, "Faturas", "-"),
  folder(9, "Abertas", "-"),
  record(10, "04/2019", "  - R$ 1888,75 - PAGAMENTO AVULSO - Débito"),
  record(10, "04/2019", "  - R$ 174,45 - Fatura referente ao depósito judicial - Débito"),
  record(10, "04/2019", "  - R$ 174,45 - Fatura referente à cobrança de depósito judicial - Crédito"),
  ...invoiceStates,
  record(6, "29/04/2019", "  - 7", "-"),
  doc(7, "Parâmetros e PEG's", "-"),
  stack(8, "Faturas", "-"),
  folder(9, "Abertas", "-", "soft"),
  record(10, "04/2019", "  - R$ 75,55 - PAGAMENTO AVULSO - Débito"),
  record(10, "04/2019", "  - R$ 75,55 - Fatura referente ao depósito judicial - Débito"),
  record(10, "04/2019", "  - R$ 75,55 - Fatura referente à cobrança de depósito judicial - Crédito"),
  ...invoiceStates,
  folder(0, "Filiais processamento"),
  folder(0, "Grupos de relatórios"),
  folder(0, "Guia de encaminhamento"),
  folder(0, "Guias"),
  folder(0, "Guias com Medicamentos Especiais"),
  folder(0, "Guias Devolvidas"),
];

/* ---------- window pieces ---------- */

const tabNames = ["Web", "Visões", "Desktop", "Workflow", "Monitor", "Ans", "Beneficiários", "Programas de saúde", "Prestadores", "Atendimento", "Processamento de Contas", "Controle Financeiro", "Diversos", "Cotação", "Autorizador externo", "Clinica", "SSO", "Gerencial", "Agendamentos", "Adm"];

interface ShellProps {
  active: boolean;
  tab: string;
  tabWidths: number[];
  ribbon: React.ReactNode;
  path: string;
  record: string;
  status: string;
  children: React.ReactNode;
}

const Shell = ({ active, tab, tabWidths, ribbon, path, record: recordTitle, status, children }: ShellProps) => (
  <AppWindow>
    <Logo><BennerLogo /></Logo>
    <TitleBar>
      <QuickBar>
        <QuickIcon $faded={active}><Printer /></QuickIcon>
        <QuickIcon $faded={active}><Funnel lit={!active} /></QuickIcon>
        <QuickIcon $w={8} $gap={8}><CaretDown color={active ? "#aaa" : "#3f6fae"} /></QuickIcon>
        <QuickIcon $w={14} $gap={9}><Building /></QuickIcon>
        <QuickIcon $w={15} $gap={8}><Help /></QuickIcon>
        <QuickIcon><Calc /></QuickIcon>
        <QuickIcon><Magnifier /></QuickIcon>
        <QuickIcon $gap={0}><PersonSearch /></QuickIcon>
      </QuickBar>
      <BarMenu><CustomizeBar /></BarMenu>
      <Title>{"Sistema Benner-Saúde - QUALIDADEAG_CORRENTE -  [vitor.barbosa]"}</Title>
      <WindowButtons $active={active}>
        <svg width="10" height="10" viewBox="0 0 10 10"><path d="M0 5.500h10" stroke="currentColor" /></svg>
        <svg width="11" height="11" viewBox="0 0 11 11" fill="none" stroke="currentColor"><path d="M.5 2.500h8v8h-8zM2.500 2.500v-2h8v8h-2" /></svg>
        <svg width="11" height="11" viewBox="0 0 11 11"><path d="M.5.5l10 10M10.500.5l-10 10" stroke="currentColor" strokeWidth="1.100" /></svg>
      </WindowButtons>
    </TitleBar>
    <TabStrip>
      {tabNames.map((name, i) => (
        <Tab key={name} $w={tabWidths[i]} $active={name === tab}>{name}</Tab>
      ))}
    </TabStrip>
    <Ribbon><RibbonBody>{ribbon}</RibbonBody></Ribbon>
    <EnvironmentBar>AMBIENTE DE TESTE</EnvironmentBar>
    <Toolbar>
      <BackArrow />
      <PathInput>
        {path}
        <DropButton>
          <svg width="8" height="5" viewBox="0 0 8 5"><path d="M0 .5h8L4 4.500z" fill="#3f68a8" /></svg>
        </DropButton>
      </PathInput>
      <SwapIcon><SwapArrows /></SwapIcon>
      <ArrowSlot><VertArrow up={!active} /></ArrowSlot>
      <RecordTitle>{recordTitle}</RecordTitle>
      <RecordActions active={active} />
    </Toolbar>
    <Workspace>{children}</Workspace>
    <StatusBar>
      <StatusIcon><Magnifier /></StatusIcon>
      <StatusCell $w={1364}>{status}</StatusCell>
      <StatusCell $w={70} />
      <StatusClock>seg, 29/04/2019-11:53<Clock /></StatusClock>
    </StatusBar>
  </AppWindow>
);

const Large = ({ w, icon, lines }: { w: number; icon: React.ReactNode; lines: string }) => (
  <LargeButton $w={w}>{icon}{lines}</LargeButton>
);

const providerButtons = (
  <>
    <Large w={80} icon={<Doctor />} lines={"Consulta de\nPrestadores"} />
    <Large w={95} icon={<PriceEvent />} lines={"Consulta Preço\ndo Evento"} />
    <Large w={100} icon={<PriceTable />} lines={"Consulta Tabela\nde Preços"} />
  </>
);

const ProviderRibbon = (
  <>
    <Group $w={382}>
      <GroupItems>
        {providerButtons}
        <Large w={101} icon={<RulesBook />} lines={"Consulta Regras\ndo Prestador"} />
      </GroupItems>
      <GroupLabel>Consultas</GroupLabel>
    </Group>
    <Group $w={75}>
      <GroupItems><Large w={69} icon={<Gears />} lines={"Classificar\nEventos"} /></GroupItems>
      <GroupLabel>Processos</GroupLabel>
    </Group>
  </>
);

const smallColumns: { w: number; items: [SmallKind, string][] }[] = [
  { w: 183, items: [["peg", "Processar PEGs em Lote"], ["digit", "Digitação de Beneficiários"], ["export", "Exportar Arq. Matriz Gerencial"]] },
  { w: 171, items: [["ab", "Reapresentação de Eventos"], ["heart", "Gerar Arquivo Previnne"], ["gears", "Liberar Teto/Alçada"]] },
  { w: 175, items: [["note", "Conferência de Notas Fiscais"], ["gears", "Monitor de Pagamentos"], ["gears", "Detalhes da Nota Fiscal"]] },
];

const BillingRibbon = (
  <>
    <Group $w={572}>
      <GroupItems>
        <Large w={83} icon={<BeneficiarySearch />} lines={"Consulta de\nBeneficiários"} />
        {providerButtons}
        <Large w={107} icon={<PackageBox />} lines={"Consulta Eventos\ndo Pacote"} />
        <Large w={101} icon={<RulesBook />} lines={"Consulta Regras\ndo Prestador"} />
      </GroupItems>
      <GroupLabel>Consultas</GroupLabel>
    </Group>
    <Group $w={172}>
      <GroupItems>
        <Large w={86} icon={<FreeChoice />} lines={"Prestador\nLivre-Escolha"} />
        <Large w={80} icon={<Exchange />} lines={"Prestador\nIntercâmbio"} />
      </GroupItems>
      <GroupLabel>Cadastros</GroupLabel>
    </Group>
    <Group $w={537}>
      <GroupItems>
        {smallColumns.map((col) => (
          <SmallColumn key={col.w} $w={col.w}>
            {col.items.map(([kind, text]) => (
              <SmallButton key={text}><SmallIcon kind={kind} />{text}</SmallButton>
            ))}
          </SmallColumn>
        ))}
      </GroupItems>
      <GroupLabel>Processos</GroupLabel>
    </Group>
  </>
);

const Entry = ({ w, label, value, right }: { w: number; label: React.ReactNode; value?: string; right?: boolean }) => (
  <Field $w={w}>
    <FieldLabel>{label}</FieldLabel>
    <FieldValue $right={right}>{value}</FieldValue>
  </Field>
);

const RecordForm = () => (
  <Form>
    <OpenFrame>
      <CutLine />
      <Frame $w={447} $h={95} $mt={6} $ml={7}>
        <Legend>Vara</Legend>
        <FieldRow $gap={22}>
          <Entry w={20} label={<>Có<u>d</u>igo:</>} />
          <Entry w={231} label={<><u>U</u>nidade Federativa:</>} />
        </FieldRow>
        <FieldRow $mt={6}><Entry w={284} label={<><u>M</u>unicípio:</>} /></FieldRow>
      </Frame>
    </OpenFrame>
    <Frame $w={473} $h={55} $mt={6}>
      <Legend>Vigência</Legend>
      <FieldRow>
        <Entry w={86} label={<>Data <u>i</u>nicial:</>} value="02/02/2019" />
        <Entry w={86} label={<>Data <u>f</u>inal:</>} value="03/05/2019" />
      </FieldRow>
    </Frame>
    <Frame $w={473} $h={452} $mt={6} $pad={13}>
      <Legend $pull={-8}>Tipo</Legend>
      <ToggleRow $ml={-10}>
        <Toggle $w={135} $on>Retenção de rendimentos</Toggle>
        <Toggle $w={112}>Retenção de tributos</Toggle>
      </ToggleRow>
      <FieldRow $mt={11}><Entry w={284} label={<><u>P</u>essoa beneficiada:</>} value="Alexandre Yamamoto" /></FieldRow>
      <FieldRow $mt={6}><Entry w={437} label={<><u>B</u>eneficiado:</>} /></FieldRow>
      <Frame $w={437} $h={132} $mt={6} $pad={13}>
        <Legend $pull={-9}>Cálculo da Retenção</Legend>
        <ToggleRow $ml={-10}>
          <Toggle $w={63}>Percentual</Toggle>
          <Toggle $w={59} $on>Valor Fixo</Toggle>
          <Toggle $w={86}>Somente o Teto</Toggle>
          <Toggle $w={123}>Valor Por Competência</Toggle>
        </ToggleRow>
        <FieldRow $mt={11}>
          <Entry w={106} label={<>Val<u>o</u>r de retenção:</>} value="1.000,00" right />
          <Check><CheckBox /><span>Reter va<u>l</u>or na competência mensal</span></Check>
        </FieldRow>
      </Frame>
      <FieldRow $mt={9}><Entry w={106} label="Reter até o valor:" value="250,00" right /></FieldRow>
      <FieldRow $mt={6}><Entry w={334} label={<>Tipo <u>d</u>a retenção:</>} value="Retenção Judicial" /></FieldRow>
      <Frame $w={437} $h={92} $mt={5} $pad={13}>
        <Legend $pull={-9}>Pensão Alimentícia</Legend>
        <ToggleRow $ml={-10}>
          <Toggle $w={42} $on>Sim</Toggle>
          <Toggle $w={40}>Não</Toggle>
        </ToggleRow>
        <FieldRow $mt={11}><Entry w={284} label="Relação de dependência:" value="Filho (a)" /></FieldRow>
      </Frame>
    </Frame>
    <Frame $w={473} $h={60} $mt={8}>
      <Legend>Alteração</Legend>
      <FieldRow $gap={3}>
        <Entry w={286} label="Usuário:" />
        <Entry w={86} label="Data:" />
      </FieldRow>
    </Frame>
    <Highlight $x={12} $y={441} $w={139} $h={46} />
  </Form>
);

export default function App() {
  return (
    <>
      <GlobalStyle />
      <Desktop>
        <Shell
          active
          tab="Prestadores"
          tabWidths={[42, 52, 62, 70, 63, 38, 87, 127, 84, 89, 156, 123, 63, 63, 123, 54, 39, 67, 99, 44]}
          ribbon={ProviderRibbon}
          path="Data inicial,Data final"
          record="02/02/2019  - 03/05/2019"
          status=""
        >
          <TreePanel>
            <Tree nodes={providerTree} open={[0, 3]} skipFirst />
            <Highlight $x={210} $y={287} $w={75} $h={70} />
          </TreePanel>
          <Scrollbar>
            <ScrollArrow />
            <Thumb $before={7} $h={246} />
            <ScrollArrow $down />
          </Scrollbar>
          <RecordForm />
          <Scrollbar $top={3}>
            <ScrollArrow />
            <Thumb $before={53} $h={545} />
            <ScrollArrow $down />
          </Scrollbar>
        </Shell>
        <Shell
          active={false}
          tab="Processamento de Contas"
          tabWidths={[42, 52, 62, 70, 63, 38, 86, 127, 80, 89, 160, 124, 63, 63, 123, 54, 39, 67, 98, 46]}
          ribbon={BillingRibbon}
          path="Competência,Valor da fatura,Observação,Natureza da fatura"
          record=""
          status="3 registros"
        >
          <TreePanel>
            <Tree nodes={billingTree} open={[0]} />
            <Highlight $x={184} $y={285} $w={528} $h={38} />
            <Highlight $x={189} $y={463} $w={512} $h={35} />
          </TreePanel>
          <Scrollbar>
            <ScrollArrow />
            <Thumb $before={190} $h={306} />
            <ScrollArrow $down />
          </Scrollbar>
        </Shell>
      </Desktop>
    </>
  );
}
